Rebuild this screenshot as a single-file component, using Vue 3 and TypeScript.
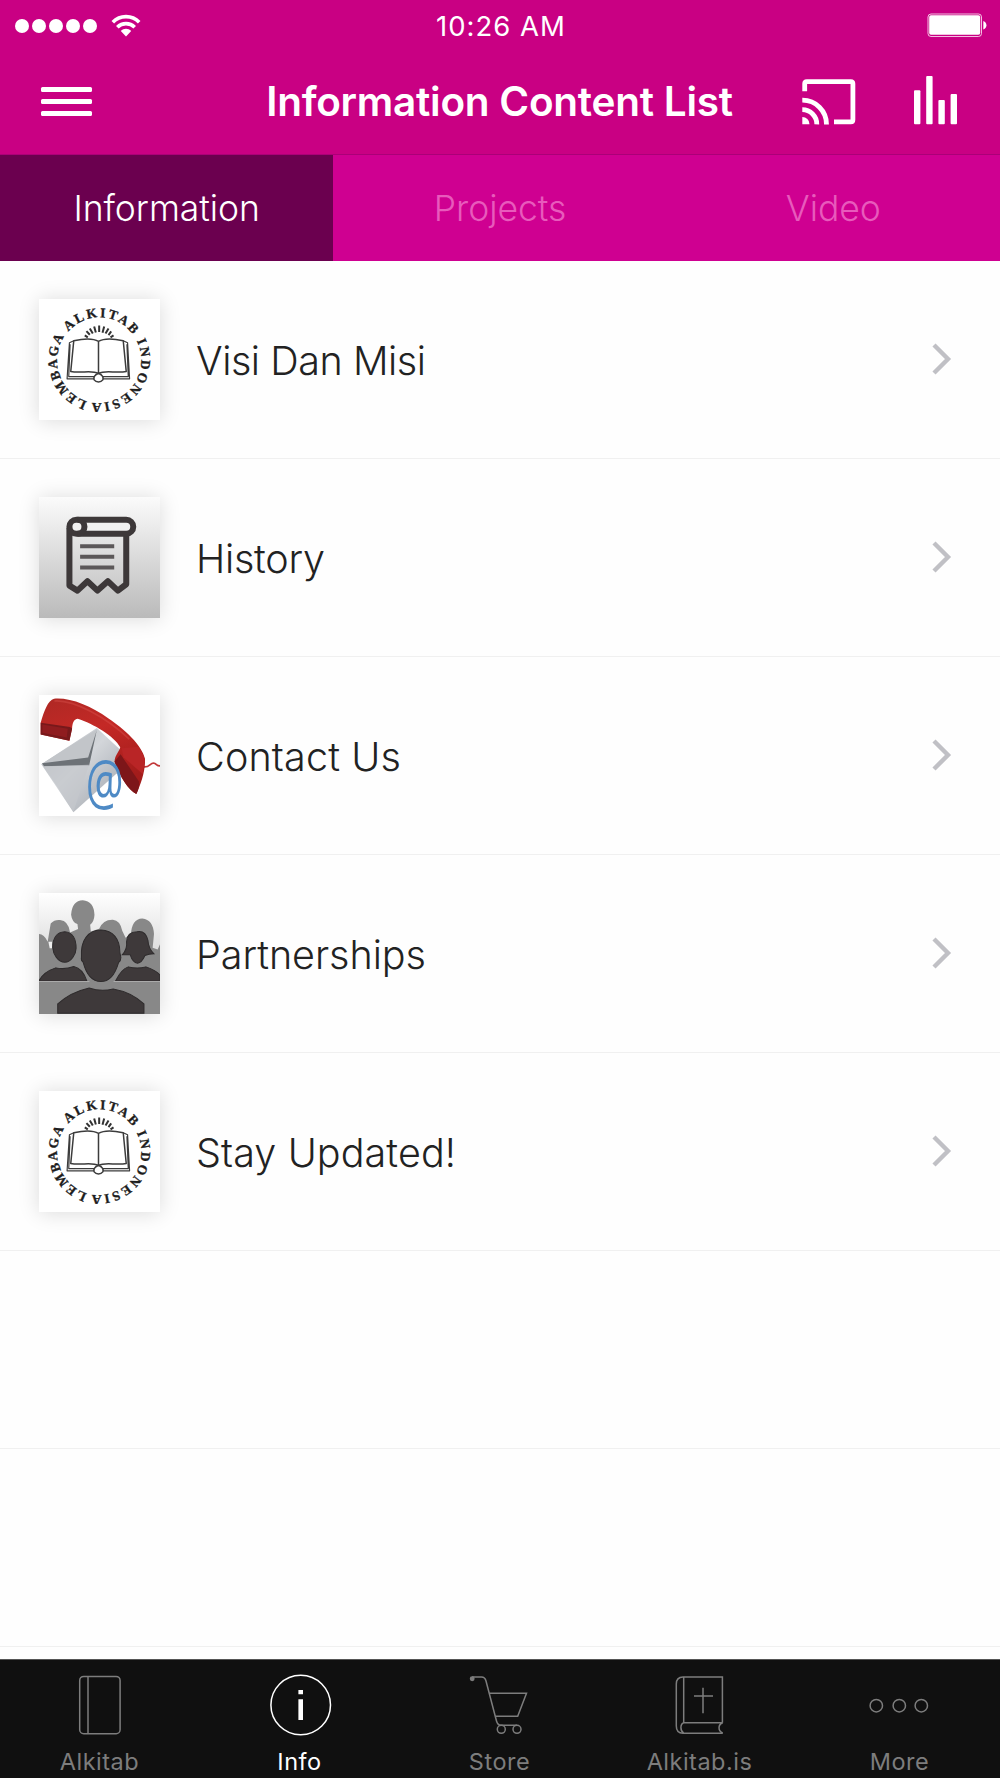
<template>
  <div class="app">
    <svg class="symbols" aria-hidden="true">
      <symbol id="lai-logo" viewBox="57 59 362 362">
        <path id="lai-ring" fill="none" d="M214.6 369A129 129 0 0 1 259.4 115A129 129 0 0 1 214.6 369" />
        <g class="ring-text">
          <text><textPath href="#lai-ring" startOffset="14" textLength="238">LEMBAGA</textPath></text>
          <text><textPath href="#lai-ring" startOffset="271" textLength="223">ALKITAB</textPath></text>
          <text><textPath href="#lai-ring" startOffset="516" textLength="281">INDONESIA</textPath></text>
        </g>
        <g fill="none" stroke="#3c3c3c" stroke-width="4.5" stroke-linejoin="round">
          <path d="M235 186C215 174 188 178 161 184L152 276C185 282 214 270 235 282C256 270 285 282 318 276L309 184C282 178 255 174 235 186V280" />
          <path d="M161 184L148 190L141 298H222M309 184L322 190L328 298H248M150 194L146 291H222M320 194L324 291H248" stroke-width="3.5" />
          <path d="M235 281C224 286 219 293 222 301C228 309 242 309 248 301C251 293 246 286 235 281Z" />
        </g>
        <path class="rays" d="M203 174L194 168M209 166L199 155M218 162L209 147M227 159L222 141M237 158V138M247 160L252 141M256 162L265 147M265 167L273 156M271 174L280 168" />
      </symbol>
    </svg>

    <header class="header">
      <div class="status-bar">
        <div class="signal">
          <span v-for="n in 5" :key="n" class="signal-dot"></span>
          <svg class="wifi" viewBox="0 0 30 24" width="30" height="24">
            <g fill="none" stroke="#fff" stroke-width="3.6">
              <path d="M1.8 8.2C9 .8 21 .8 28.2 8.2" />
              <path d="M6.3 13.3C11.2 8.4 18.8 8.4 23.7 13.3" />
            </g>
            <path fill="#fff" d="M9.8 17C12.7 14 17.3 14 20.2 17L15 22.4Z" />
          </svg>
        </div>
        <span class="clock">10:26 AM</span>
        <svg class="battery" viewBox="0 0 60 25" width="60" height="25">
          <rect x="1" y="1" width="53.5" height="22.5" rx="3" fill="none" stroke="#fff" stroke-opacity=".75" />
          <rect x="2.2" y="2.2" width="51" height="19.5" rx="1.8" fill="#fff" />
          <path d="M56.3 8C60.5 9.5 60.5 15 56.3 16.5Z" fill="#fff" />
        </svg>
      </div>
      <div class="nav-bar">
        <button class="menu-button" aria-label="Menu">
          <span></span>
          <span></span>
          <span></span>
        </button>
        <h1 class="title">Information Content List</h1>
        <div class="actions">
          <svg viewBox="0 0 54 50" width="54" height="50">
            <g fill="none" stroke="#fff" stroke-width="4.8">
              <path d="M2.7 16.2V8.7Q2.7 6.6 4.8 6.6H48.8Q50.9 6.6 50.9 8.7V44.7Q50.9 46.8 48.8 46.8H32" />
              <path d="M.3 25.2A24 24 0 0 1 24.5 49.4" />
              <path d="M.3 34.7A14.5 14.5 0 0 1 14.8 49.4" />
            </g>
            <path fill="#fff" d="M.3 42A7.2 7.2 0 0 1 7.5 49.2H.3Z" />
          </svg>
          <svg viewBox="0 0 44 50" width="44" height="50">
            <g fill="#fff">
              <rect x="0" y="15.3" width="6.4" height="33.9" rx="1" />
              <rect x="12.2" y="1" width="6.4" height="48.2" rx="1" />
              <rect x="24.4" y="25" width="6.4" height="24.2" rx="1" />
              <rect x="36.6" y="19" width="6.4" height="30.2" rx="1" />
            </g>
          </svg>
        </div>
      </div>
    </header>

    <nav class="tabs">
      <button
        v-for="tab in tabs"
        :key="tab"
        class="tab"
        :class="{ active: tab === activeTab }"
        @click="activeTab = tab"
      >{{ tab }}</button>
    </nav>

    <ul class="list">
      <li v-for="item in items" :key="item.title" class="row">
        <div class="thumb">
          <svg v-if="item.image === 'logo'" class="picture"><use href="#lai-logo" /></svg>

          <svg v-else-if="item.image === 'history'" class="picture" viewBox="57 53 362 362">
            <defs>
              <linearGradient id="paper-bg" x1="0" y1="0" x2="0" y2="1">
                <stop offset="0" stop-color="#fbfbfb" />
                <stop offset="1" stop-color="#bababa" />
              </linearGradient>
            </defs>
            <rect x="57" y="53" width="362" height="362" fill="url(#paper-bg)" />
            <g fill="none" stroke="#3d3839" stroke-width="18" stroke-linejoin="round">
              <path d="M148 145V318L172 333L202 305L232 333L263 305L293 333L318 314V168" />
              <rect x="148" y="121" width="191" height="42" rx="21" fill="#f1f1f1" />
              <path d="M172 121C200 121 200 163 172 163" />
            </g>
            <path d="M180 200H282M180 232H282M180 264H282" stroke="#5c5859" stroke-width="12" />
          </svg>

          <svg v-else-if="item.image === 'contact'" class="picture" viewBox="57 47 362 362">
            <defs>
              <linearGradient id="envelope" x1="0" y1="0" x2="1" y2="1">
                <stop offset="0" stop-color="#aeb2b8" />
                <stop offset=".45" stop-color="#d3d6da" />
                <stop offset="1" stop-color="#9ba0a8" />
              </linearGradient>
              <linearGradient id="handset" x1="0" y1="0" x2=".4" y2="1">
                <stop offset="0" stop-color="#ae2824" />
                <stop offset=".45" stop-color="#c42926" />
                <stop offset="1" stop-color="#a31c1b" />
              </linearGradient>
            </defs>
            <path d="M64 254L230 146L306 216L290 281L160 398Z" fill="url(#envelope)" />
            <path d="M64 254L230 150L205 240Z" fill="#c2c5c9" />
            <path d="M66 251L204 234L230 152L207 258L72 260Z" fill="#6d7277" />
            <path d="M72 260L207 256L160 396" fill="#c4c7cc" opacity=".7" />
            <path d="M370 262C390 264 390 247 402 251C410 254 408 259 419 259" fill="none" stroke="#c2393a" stroke-width="5" />
            <path d="M62 130C72 95 84 62 102 58C150 54 210 78 265 117C312 149 365 196 374 238C376 270 362 315 348 343C323 330 300 292 283 246C284 225 298 216 300 203C283 171 220 133 173 118C161 119 157 131 156 147L148 184L62 165Z" fill="url(#handset)" />
            <path d="M62 130L150 143L156 147L148 184L62 165Z" fill="#77191b" />
            <path d="M67 135L143 148L140 174L67 160Z" fill="#8f1c1f" />
            <path d="M283 246L301 224L356 306C359 318 352 337 348 343C323 330 300 292 283 246Z" fill="#7d1619" />
            <path d="M304 206L310 233L367 283L374 244C370 225 361 210 354 202Z" fill="#b92526" />
            <path d="M103 65C160 61 255 111 327 179" fill="none" stroke="#dd5650" stroke-width="5" opacity=".4" />
            <text class="at-sign" transform="translate(197 376) scale(1 1.48)">@</text>
          </svg>

          <svg v-else class="picture" viewBox="57 57 362 362">
            <defs>
              <linearGradient id="crowd-bg" x1="0" y1="0" x2="0" y2="1">
                <stop offset="0" stop-color="#fff" />
                <stop offset=".5" stop-color="#dcdcdc" />
              </linearGradient>
            </defs>
            <rect x="57" y="57" width="362" height="362" fill="url(#crowd-bg)" />
            <path
              d="M57 180Q72 180 83 203L92 148Q104 136 120 138Q145 140 150 175L174 165L172 150Q156 145 153 122Q156 80 188 79Q221 82 223 122Q222 143 210 152L212 172L237 164Q249 136 278 137Q300 139 306 170L316 191L332 182Q334 134 366 133Q399 137 401 180Q399 202 397 221L412 226L419 210V419H57Z"
              fill="#888"
            />
            <path d="M85 203H96V222H89Z" fill="#eee" />
            <g fill="#3e393a" stroke="#2e2b2c" stroke-width="3">
              <path d="M134 173C157 174 168 194 168 222C168 240 153 264 134 264C114 264 99 240 98 220C98 193 110 174 134 173Z" />
              <path d="M57 320Q70 293 107 281Q134 287 161 277Q188 283 200 320Z" />
              <path d="M306 242Q322 225 319 203Q320 173 350 173Q376 168 383 199Q384 222 401 239Q385 240 374 244Q364 266 352 267Q337 265 330 242Z" />
              <path d="M286 320Q304 284 324 278Q351 285 377 278Q408 289 419 302V320Z" />
              <path d="M242 168C279 169 299 195 299 235L302 250Q302 260 295 265C283 306 267 322 242 322C216 322 199 303 189 264Q182 260 184 249C181 197 204 169 242 168Z" />
              <path d="M113 417V389Q150 354 207 341Q242 353 279 344Q335 354 371 389V417Z" />
            </g>
            <path d="M57 322H208M280 322H419" stroke="#aaa" stroke-width="3" />
          </svg>
        </div>
        <span class="row-title" :style="{ letterSpacing: item.spacing + 'px' }">{{ item.title }}</span>
        <svg class="chevron" viewBox="0 0 20 32" width="20" height="32">
          <path d="M2 2L16 16L2 30" fill="none" stroke="#c0c0c5" stroke-width="4.4" />
        </svg>
      </li>
      <li v-for="n in 2" :key="'empty' + n" class="row"></li>
    </ul>

    <footer class="tab-bar">
      <button
        v-for="entry in footerItems"
        :key="entry.label"
        class="footer-item"
        :class="{ active: entry.label === 'Info' }"
      >
        <svg class="footer-icon" viewBox="0 0 100 70" width="100" height="70">
          <template v-if="entry.icon === 'book'">
            <rect x="29.7" y="6.4" width="40.4" height="57.3" rx="4" />
            <path d="M38 6.4V63.7" />
          </template>
          <template v-else-if="entry.icon === 'info'">
            <circle cx="50.7" cy="35" r="29.8" />
            <path d="M50.7 20V24.2M50.7 29.3V50" stroke-width="4.6" />
          </template>
          <template v-else-if="entry.icon === 'cart'">
            <circle cx="22.2" cy="8.7" r="1.7" fill="currentColor" />
            <path d="M22 7H31.5Q35 7 36 11L46.5 51Q47.7 55.3 51 55.3H67" />
            <path d="M39.3 23.3H76.5L67.7 46.2H45.2" />
            <circle cx="51.3" cy="59.3" r="4" />
            <circle cx="67" cy="59.3" r="4" />
          </template>
          <template v-else-if="entry.icon === 'bible'">
            <path d="M72.4 52.7V6.9H33Q26.3 7 26.3 14V56Q26.3 63.2 33 63.2H72.7" />
            <path d="M33.7 6.9V52.7H72.7M33.7 52.7C30 54 30 61 33.7 63.2M72.7 52.7C67.8 54.5 67.8 61 72.7 63" />
            <path d="M53 17.7V43.3M44 26H63" />
          </template>
          <template v-else>
            <circle cx="26.3" cy="35.7" r="6.2" />
            <circle cx="49.3" cy="35.7" r="6.2" />
            <circle cx="71.3" cy="35.7" r="6.2" />
          </template>
        </svg>
        <span class="footer-label">{{ entry.label }}</span>
      </button>
    </footer>
  </div>
</template>

<script lang="ts" setup>
import { ref } from 'vue';

interface ListItem {
  title: string;
  image: 'logo' | 'history' | 'contact' | 'partners';
  spacing: number;
}

interface FooterItem {
  label: string;
  icon: string;
}

const tabs = ['Information', 'Projects', 'Video'];
const activeTab = ref('Information');

const items: ListItem[] = [
  { title: 'Visi Dan Misi', image: 'logo', spacing: -0.45 },
  { title: 'History', image: 'history', spacing: -0.25 },
  { title: 'Contact Us', image: 'contact', spacing: 0.15 },
  { title: 'Partnerships', image: 'partners', spacing: -0.05 },
  { title: 'Stay Updated!', image: 'logo', spacing: 0.1 },
];

const footerItems: FooterItem[] = [
  { label: 'Alkitab', icon: 'book' },
  { label: 'Info', icon: 'info' },
  { label: 'Store', icon: 'cart' },
  { label: 'Alkitab.is', icon: 'bible' },
  { label: 'More', icon: 'more' },
];
</script>

<style>
body {
  margin: 0;
  background: #fefefe;
}
</style>

<style scoped>
.app {
  display: flex;
  flex-direction: column;
  width: 1000px;
  height: 1778px;
  overflow: hidden;
  background: #fefefe;
  font-family: Inter, 'Liberation Sans', sans-serif;
}

.app * {
  box-sizing: border-box;
}

button {
  padding: 0;
  border: none;
  background: none;
  font-family: inherit;
  cursor: pointer;
}

.symbols {
  position: absolute;
  width: 0;
  height: 0;
}

.header {
  flex: none;
  height: 155px;
  border-bottom: 1px solid #ab0078;
  background: #c90083;
  color: #fff;
}

.status-bar {
  display: grid;
  grid-template-columns: 1fr auto 1fr;
  align-items: center;
  height: 50px;
  padding: 0 13px 0 15px;
}

.signal {
  display: flex;
  align-items: center;
  gap: 3px;
}

.signal-dot {
  width: 14px;
  height: 14px;
  border-radius: 50%;
  background: #fff;
}

.wifi {
  margin-left: 11px;
}

.clock {
  padding-top: 1px;
  font-size: 27.5px;
  line-height: 50px;
  letter-spacing: 1px;
}

.battery {
  justify-self: end;
}

.nav-bar {
  display: grid;
  grid-template-columns: 1fr auto 1fr;
  align-items: center;
  height: 104px;
  padding: 0 42px 2px 41px;
}

.menu-button {
  display: flex;
  flex-direction: column;
  gap: 7px;
  width: 51px;
}

.menu-button span {
  height: 5px;
  border-radius: 1.5px;
  background: #fff;
}

.title {
  margin: 0;
  font-size: 40.5px;
  font-weight: 600;
  letter-spacing: -0.25px;
  white-space: nowrap;
}

.actions {
  display: flex;
  justify-content: flex-end;
  gap: 58px;
  padding-bottom: 2px;
}

.tabs {
  display: grid;
  flex: none;
  grid-template-columns: repeat(3, 1fr);
  height: 106px;
  background: #cf0091;
}

.tab {
  color: #e85abc;
  font-size: 35.5px;
  font-weight: 300;
  letter-spacing: -0.05px;
}

.tab.active {
  background: #6b004f;
  color: #fff;
}

.list {
  flex: 1;
  min-height: 0;
  margin: 0;
  padding: 0;
  overflow: hidden;
  list-style: none;
}

.row {
  display: flex;
  align-items: center;
  height: 198px;
  padding: 0 48px 0 38.5px;
  border-bottom: 1px solid #f0f0f0;
}

.thumb {
  width: 121px;
  height: 121px;
  background: #fff;
  box-shadow: 0 1px 20px rgba(0, 0, 0, 0.14);
}

.picture {
  display: block;
  width: 121px;
  height: 121px;
}

.ring-text {
  fill: #1d1d1d;
  stroke: #1d1d1d;
  stroke-width: 1;
  font-family: 'Liberation Serif', serif;
  font-size: 40px;
  font-weight: 700;
}

.rays {
  fill: none;
  stroke: #333;
  stroke-width: 6;
}

.at-sign {
  fill: #4e8ac5;
  font-family: 'Open Sans', sans-serif;
  font-size: 126px;
}

.row-title {
  flex: 1;
  padding-top: 2px;
  margin-left: 36.5px;
  color: #222;
  font-size: 39.5px;
  font-weight: 300;
}

.chevron {
  margin-bottom: 2px;
}

.tab-bar {
  display: grid;
  flex: none;
  grid-template-columns: repeat(5, 1fr);
  height: 119px;
  border-top: 1px solid #555;
  background: #101010;
}

.footer-item {
  display: flex;
  flex-direction: column;
  align-items: center;
  padding-top: 10px;
  color: #7d7d7d;
}

.footer-icon {
  fill: none;
  stroke: currentColor;
  stroke-width: 1.5;
}

.footer-label {
  margin: 7px 1px 0 0;
  font-size: 23.5px;
  line-height: 30px;
  letter-spacing: 0.5px;
}

.footer-item.active {
  color: #fff;
}
</style>
